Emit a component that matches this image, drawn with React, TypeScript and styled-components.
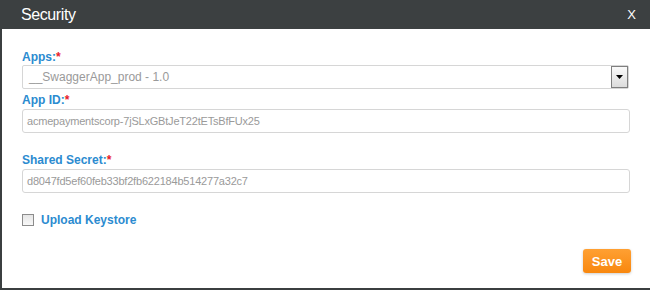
import React from "react";
import styled, { createGlobalStyle } from "styled-components";

const Global = createGlobalStyle`
  html, body { margin: 0; padding: 0; background: #fff; }
  body { font-family: "Liberation Sans", Arial, sans-serif; }
  * { box-sizing: border-box; }
`;

const Dialog = styled.div`
  width: 650px;
  height: 290px;
  border-left: 2px solid #3b3f40;
  border-bottom: 2px solid #3b3f40;
  display: flex;
  flex-direction: column;
  background: #fff;
`;

const Header = styled.div`
  height: 29px;
  margin-left: -2px;
  background: #3c4041;
  color: #fff;
  display: flex;
  align-items: center;
  justify-content: space-between;
  padding: 0 14px 0 21px;
`;

const Title = styled.div`
  font-size: 16px;
  line-height: 18px;
  margin-top: 1px;
  letter-spacing: -0.4px;
`;

const Close = styled.div`
  font-size: 13px;
  line-height: 14px;
`;

const Body = styled.div`
  flex: 1;
  display: flex;
  flex-direction: column;
  padding: 21px 19px 0 20px;
`;

const Label = styled.div<{ $top: number; $bottom: number }>`
  margin-top: ${(p) => p.$top}px;
  margin-bottom: ${(p) => p.$bottom}px;
  font-size: 12px;
  line-height: 14px;
  font-weight: bold;
  color: #2b8bd0;
`;

const Req = styled.span`
  color: #e8202a;
`;

const Box = styled.div<{ $size?: number }>`
  height: 24px;
  width: 608px;
  border: 1px solid #d6d6d6;
  border-radius: 3px;
  display: flex;
  align-items: center;
  padding-left: 4px;
  font-size: ${(p) => p.$size ?? 11}px;
  letter-spacing: ${(p) => (p.$size ? 0 : -0.2)}px;
  color: #9a9a9a;
  background: #fff;
`;

const SelectBox = styled(Box)`
  justify-content: space-between;
  padding-right: 0;
  padding-left: 6px;
  width: 607px;
  border-radius: 2px;
`;

const DropBtn = styled.div`
  width: 17px;
  height: 22px;
  border: 1px solid #7f7f7f;
  background: linear-gradient(#fafafa, #dcdcdc);
  display: flex;
  align-items: center;
  justify-content: center;
`;

const CheckRow = styled.label`
  margin-top: 21px;
  display: flex;
  align-items: center;
  gap: 7px;
  font-size: 12px;
  font-weight: bold;
  color: #2b8bd0;
  height: 12px;
`;

const Check = styled.span`
  width: 12px;
  height: 12px;
  border: 1px solid #8c8c8c;
  background: linear-gradient(#e6e6e6, #f8f8f8);
`;

const Footer = styled.div`
  margin-top: 23px;
  display: flex;
  justify-content: flex-end;
`;

const SaveBtn = styled.button`
  width: 48px;
  height: 24px;
  border: none;
  border-radius: 3px;
  background: linear-gradient(#ffa033, #f8870e);
  box-shadow: 0 1px 3px rgba(0, 0, 0, 0.2);
  color: #fff;
  font-family: "Liberation Sans", Arial, sans-serif;
  font-weight: bold;
  font-size: 13px;
  padding: 0;
`;

export default function App() {
  return (
    <>
      <Global />
      <Dialog>
        <Header>
          <Title>Security</Title>
          <Close>X</Close>
        </Header>
        <Body>
          <Label $top={0} $bottom={1}>
            Apps:<Req>*</Req>
          </Label>
          <SelectBox $size={12}>
            <span>__SwaggerApp_prod - 1.0</span>
            <DropBtn>
              <svg width="7" height="4" viewBox="0 0 7 4">
                <path d="M0 0h7L3.5 4z" fill="#000" />
              </svg>
            </DropBtn>
          </SelectBox>
          <Label $top={4} $bottom={2}>
            App ID:<Req>*</Req>
          </Label>
          <Box>acmepaymentscorp-7jSLxGBtJeT22tETsBfFUx25</Box>
          <Label $top={20} $bottom={2}>
            Shared Secret:<Req>*</Req>
          </Label>
          <Box>d8047fd5ef60feb33bf2fb622184b514277a32c7</Box>
          <CheckRow>
            <Check />
            Upload Keystore
          </CheckRow>
          <Footer>
            <SaveBtn>Save</SaveBtn>
          </Footer>
        </Body>
      </Dialog>
    </>
  );
}
